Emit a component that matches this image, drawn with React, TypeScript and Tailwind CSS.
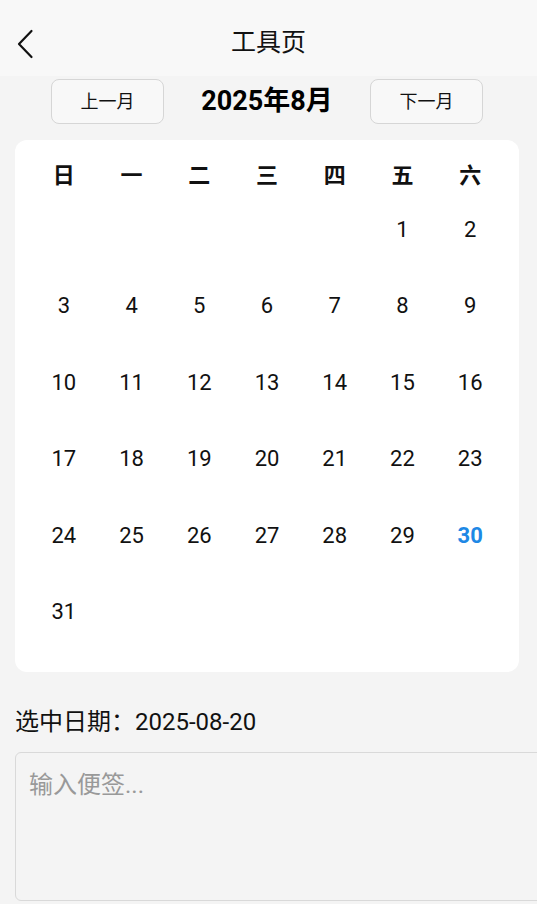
import { useState } from "react";

const FONT = "font-['Roboto','Noto_Sans_CJK_SC',sans-serif]";

const WEEKDAYS = ["日", "一", "二", "三", "四", "五", "六"];

function buildDays(year: number, month: number) {
  const first = new Date(year, month - 1, 1).getDay();
  const total = new Date(year, month, 0).getDate();
  const cells: (number | null)[] = [];
  for (let i = 0; i < first; i++) cells.push(null);
  for (let d = 1; d <= total; d++) cells.push(d);
  while (cells.length % 7 !== 0) cells.push(null);
  return cells;
}

export default function App() {
  const [note, setNote] = useState("");
  const days = buildDays(2025, 8);
  const today = 30;

  return (
    <div className={`${FONT} min-h-[904px] w-[537px] overflow-hidden bg-[#f4f4f4] text-[#111]`}>
      {/* Top bar */}
      <header className="relative flex h-[76px] items-center justify-center bg-[#f8f8f8]">
        <button className="absolute left-[12px] top-[26px] flex h-[36px] w-[26px] items-center justify-center">
          <svg width="18" height="30" viewBox="0 0 18 30" fill="none" aria-hidden>
            <path
              d="M15.5 2L3 15L15.5 28"
              stroke="#111"
              strokeWidth="2.2"
              strokeLinecap="round"
              strokeLinejoin="round"
            />
          </svg>
        </button>
        <h1 className="pt-[8px] text-[25px] leading-none">工具页</h1>
      </header>

      {/* Month switcher */}
      <div className="flex h-[51px] items-center justify-center gap-[36px] pr-[3px]">
        <button className="h-[45px] w-[113px] rounded-[8px] border border-[#d6d6d6] bg-[#f8f8f8] text-[18px]">
          上一月
        </button>
        <div className="w-[134px] whitespace-nowrap text-center text-[27px] font-bold text-black">2025年8月</div>
        <button className="h-[45px] w-[113px] rounded-[8px] border border-[#d6d6d6] bg-[#f8f8f8] text-[18px]">
          下一月
        </button>
      </div>

      {/* Calendar */}
      <div className="mx-[15px] mt-[13px] w-[504px] rounded-[12px] bg-white px-[15px] pb-[26px] pt-[15px]">
        <div className="grid h-[40px] grid-cols-7 items-center">
          {WEEKDAYS.map((w) => (
            <div key={w} className="text-center text-[22px] font-bold">
              {w}
            </div>
          ))}
        </div>
        <div className="grid grid-cols-7 gap-y-[8.5px]">
          {days.map((d, i) => (
            <div
              key={i}
              className={`flex h-[68px] items-center justify-center text-[22px] ${
                d === today ? "font-bold text-[#1e88e5]" : ""
              }`}
            >
              {d ?? ""}
            </div>
          ))}
        </div>
      </div>

      {/* Note */}
      <p className="mt-[36px] px-[15px] text-[24px] leading-[28px]">选中日期：2025-08-20</p>
      <textarea
        value={note}
        onChange={(e) => setNote(e.target.value)}
        placeholder="输入便签..."
        className="mx-[15px] mt-[16px] block h-[149px] w-[540px] resize-none rounded-[6px] border border-[#d9d9d9] bg-[#f4f4f4] px-[13px] py-[18px] text-[24px] leading-[28px] placeholder:text-[#999] outline-none"
      />
    </div>
  );
}
